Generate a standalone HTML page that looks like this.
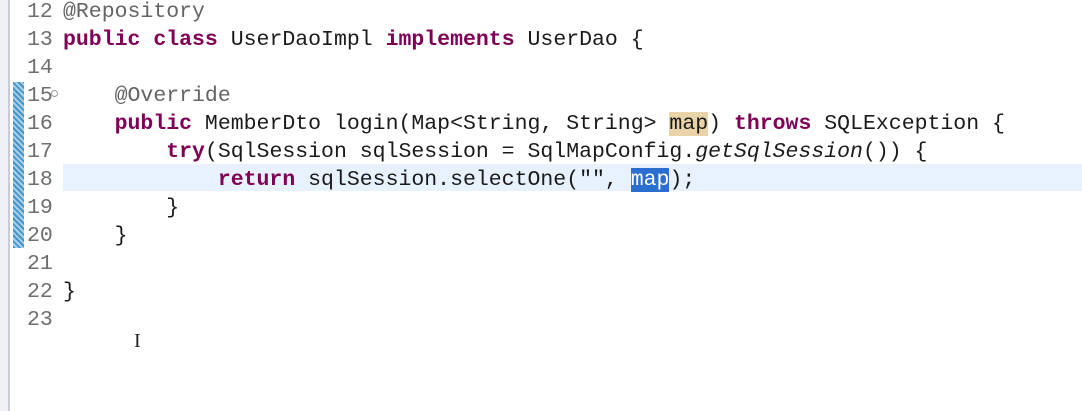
<!DOCTYPE html>
<html><head><meta charset="utf-8"><style>
html,body{margin:0;padding:0;background:#fff;width:1082px;height:411px;overflow:hidden}
.gut{position:absolute;left:0;top:0;width:8px;height:411px;background:#eef0f3;border-right:2px solid #c9ccd2}
.mark{position:absolute;left:13px;width:11px;background:repeating-linear-gradient(45deg,#4a94c8 0 2px,#a8cfe8 2px 4px)}
.hl{position:absolute;left:63px;right:0;top:164px;height:27px;background:#e8f2fe}
.code{position:absolute;left:0;top:-2px;font-family:"Liberation Mono",monospace;font-size:21.5px;line-height:28px;color:#1a1a1a;white-space:pre}
.ln{display:inline-block;width:63px;box-sizing:border-box;padding-left:27px;color:#6e6e6e}
.k{color:#7f0055;font-weight:bold}
.a{color:#646464}
.i{font-style:italic}
.m1{background:#e9d3a9}
.m2{background:#2a6fd0;color:#fff}
.fold{position:absolute;left:51px;top:90px;width:5px;height:5px;border:1px solid #999;border-radius:50%}
.cur{position:absolute;left:134px;top:330px;font-family:"Liberation Serif",serif;font-size:20px;color:#222}
</style></head><body>
<div class="gut"></div>
<div class="hl"></div>
<div class="mark" style="top:82px;height:166px"></div>
<div class="code"><span class="ln">12</span><span class="a">@Repository</span>
<span class="ln">13</span><span class="k">public</span> <span class="k">class</span> UserDaoImpl <span class="k">implements</span> UserDao {
<span class="ln">14</span>
<span class="ln">15</span>    <span class="a">@Override</span>
<span class="ln">16</span>    <span class="k">public</span> MemberDto login(Map&lt;String, String&gt; <span class="m1">map</span>) <span class="k">throws</span> SQLException {
<span class="ln">17</span>        <span class="k">try</span>(SqlSession sqlSession = SqlMapConfig.<span class="i">getSqlSession</span>()) {
<span class="ln">18</span>            <span class="k">return</span> sqlSession.selectOne("", <span class="m2">map</span>);
<span class="ln">19</span>        }
<span class="ln">20</span>    }
<span class="ln">21</span>
<span class="ln">22</span>}
<span class="ln">23</span></div>
<div class="fold"></div>
<div class="cur">I</div>
</body></html>
